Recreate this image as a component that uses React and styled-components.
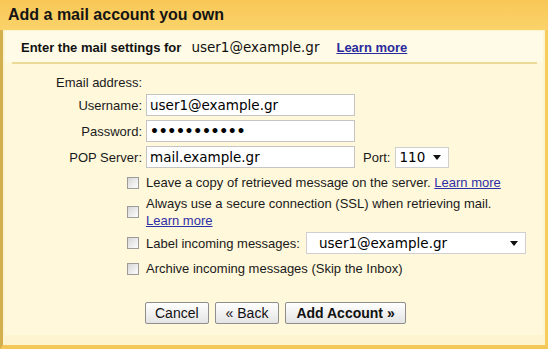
import styled, { createGlobalStyle } from 'styled-components';

const GlobalStyle = createGlobalStyle`
  html, body {
    margin: 0;
    padding: 0;
    background: #ffffff;
  }
  body {
    font-family: "Liberation Sans", Arial, sans-serif;
    font-size: 13px;
    color: #000;
  }
  * {
    box-sizing: border-box;
  }
`;

const Frame = styled.div`
  width: 548px;
  height: 349px;
  display: flex;
  flex-direction: column;
`;

const Header = styled.div`
  height: 30px;
  flex: 0 0 30px;
  display: flex;
  align-items: center;
  padding-left: 8px;
  background: linear-gradient(#f8c757, #fbd36a);
  font-size: 16px;
  font-weight: 700;
  color: #141414;
`;

const Body = styled.div`
  flex: 1;
  display: flex;
  flex-direction: column;
  background: #fef4cf;
  border-left: 3px solid #d3af4e;
  border-right: 3px solid #f7cc5f;
  border-bottom: 4px solid #f4c75b;
`;

const Inner = styled.div`
  flex: 1;
  margin: 1px 2px 10px 2px;
  background: #fff8db;
  display: flex;
  flex-direction: column;
`;

const IntroRow = styled.div`
  height: 31px;
  display: flex;
  align-items: center;
  padding-left: 16px;
  padding-top: 1px;
  background: #fffbe6;
`;

const IntroText = styled.span`
  font-weight: 700;
  font-size: 13px;
  color: #111;
`;

const IntroEmail = styled.span`
  font-family: "DejaVu Sans", Verdana, sans-serif;
  font-size: 13.5px;
  margin-left: 10px;
  color: #111;
`;

const IntroLink = styled.a`
  margin-left: 17px;
  font-weight: 700;
  color: #2a2a9c;
  text-decoration: underline;
`;

const Divider = styled.div`
  height: 2px;
  margin: 0 6px 0 7px;
  background: #ebdb96;
`;

const Form = styled.div`
  display: flex;
  flex-direction: column;
`;

const FieldRow = styled.div`
  display: flex;
  align-items: center;
  height: ${(p) => p.h || 22}px;
  margin-top: ${(p) => p.mt || 0}px;
`;

const Label = styled.label`
  width: 141px;
  padding-right: 4px;
  text-align: right;
  color: #1a1a1a;
`;

const TextInput = styled.input`
  width: 209px;
  height: 22px;
  border: 1px solid #c4c4c4;
  background: #fff;
  padding: 0 3px;
  font-family: "DejaVu Sans", Verdana, sans-serif;
  font-size: 13.5px;
  color: #000;
  outline: none;
  &[type='password'] {
    font-size: 14px;
    letter-spacing: -0.3px;
    font-weight: 700;
  }
`;

const PortLabel = styled.span`
  margin-left: 8px;
  margin-right: 5px;
  color: #1a1a1a;
`;

const FakeSelect = styled.div`
  width: ${(p) => p.w}px;
  height: ${(p) => p.h || 22}px;
  border: 1px solid #cfcfcf;
  background: #fff;
  display: flex;
  align-items: center;
  justify-content: space-between;
  padding: 0 7px 0 ${(p) => p.pl || 3}px;
  font-family: "DejaVu Sans", Verdana, sans-serif;
  font-size: ${(p) => p.fs || 13}px;
  color: #000;
`;

const Arrow = () => (
  <svg width="8" height="5" viewBox="0 0 8 5">
    <path d="M0 0 L8 0 L4 5 Z" fill="#111" />
  </svg>
);

const CheckRow = styled.div`
  display: flex;
  align-items: center;
  min-height: ${(p) => p.h || 16}px;
  margin-top: ${(p) => p.mt || 0}px;
  padding-left: 122px;
`;

const Box = styled.input`
  appearance: none;
  margin: 0 7px 0 0;
  width: 12px;
  height: 12px;
  flex: 0 0 12px;
  border: 1px solid #9c9c9c;
  background: linear-gradient(135deg, #d6d6d6, #f6f6f6 80%);
`;

const CheckText = styled.div`
  line-height: 17px;
  color: #1a1a1a;
  width: ${(p) => (p.w ? `${p.w}px` : 'auto')};
`;

const Link = styled.a`
  color: #2f2fa6;
  text-decoration: underline;
`;

const Buttons = styled.div`
  display: flex;
  gap: 6px;
  padding-left: 140px;
  margin-top: 25px;
`;

const Button = styled.button`
  height: 22px;
  padding: 0 ${(p) => p.px || 10}px;
  border: 1px solid #8e8e8e;
  border-radius: 2px;
  background: linear-gradient(#ffffff, #e4e4e4);
  font-family: "Liberation Sans", Arial, sans-serif;
  font-size: 14px;
  font-weight: ${(p) => (p.primary ? 700 : 400)};
  color: #111;
`;

export default function App() {
  return (
    <Frame>
      <GlobalStyle />
      <Header>Add a mail account you own</Header>
      <Body>
        <Inner>
          <IntroRow>
            <IntroText>Enter the mail settings for</IntroText>
            <IntroEmail>user1@example.gr</IntroEmail>
            <IntroLink href="#">Learn more</IntroLink>
          </IntroRow>
          <Divider />
          <Form>
            <FieldRow h={20} mt={8}>
              <Label>Email address:</Label>
            </FieldRow>
            <FieldRow mt={2}>
              <Label>Username:</Label>
              <TextInput type="text" defaultValue="user1@example.gr" />
            </FieldRow>
            <FieldRow mt={4}>
              <Label>Password:</Label>
              <TextInput type="password" defaultValue="secretpass1" />
            </FieldRow>
            <FieldRow mt={4}>
              <Label>POP Server:</Label>
              <TextInput type="text" defaultValue="mail.example.gr" />
              <PortLabel>Port:</PortLabel>
              <FakeSelect w={54} h={21} fs={13.5}>
                110
                <Arrow />
              </FakeSelect>
            </FieldRow>

            <CheckRow mt={6}>
              <Box type="checkbox" />
              <CheckText>
                Leave a copy of retrieved message on the server. <Link href="#">Learn more</Link>
              </CheckText>
            </CheckRow>
            <CheckRow mt={4}>
              <Box type="checkbox" />
              <CheckText>
                Always use a secure connection (SSL) when retrieving mail.
                <br />
                <Link href="#">Learn more</Link>
              </CheckText>
            </CheckRow>
            <CheckRow mt={3} h={22}>
              <Box type="checkbox" />
              <CheckText w={160}>Label incoming messages:</CheckText>
              <FakeSelect w={220} pl={12} fs={13.5}>
                user1@example.gr
                <Arrow />
              </FakeSelect>
            </CheckRow>
            <CheckRow mt={6}>
              <Box type="checkbox" />
              <CheckText>Archive incoming messages (Skip the Inbox)</CheckText>
            </CheckRow>

            <Buttons>
              <Button px={9}>Cancel</Button>
              <Button px={10}>« Back</Button>
              <Button px={10} primary>Add Account »</Button>
            </Buttons>
          </Form>
        </Inner>
      </Body>
    </Frame>
  );
}
